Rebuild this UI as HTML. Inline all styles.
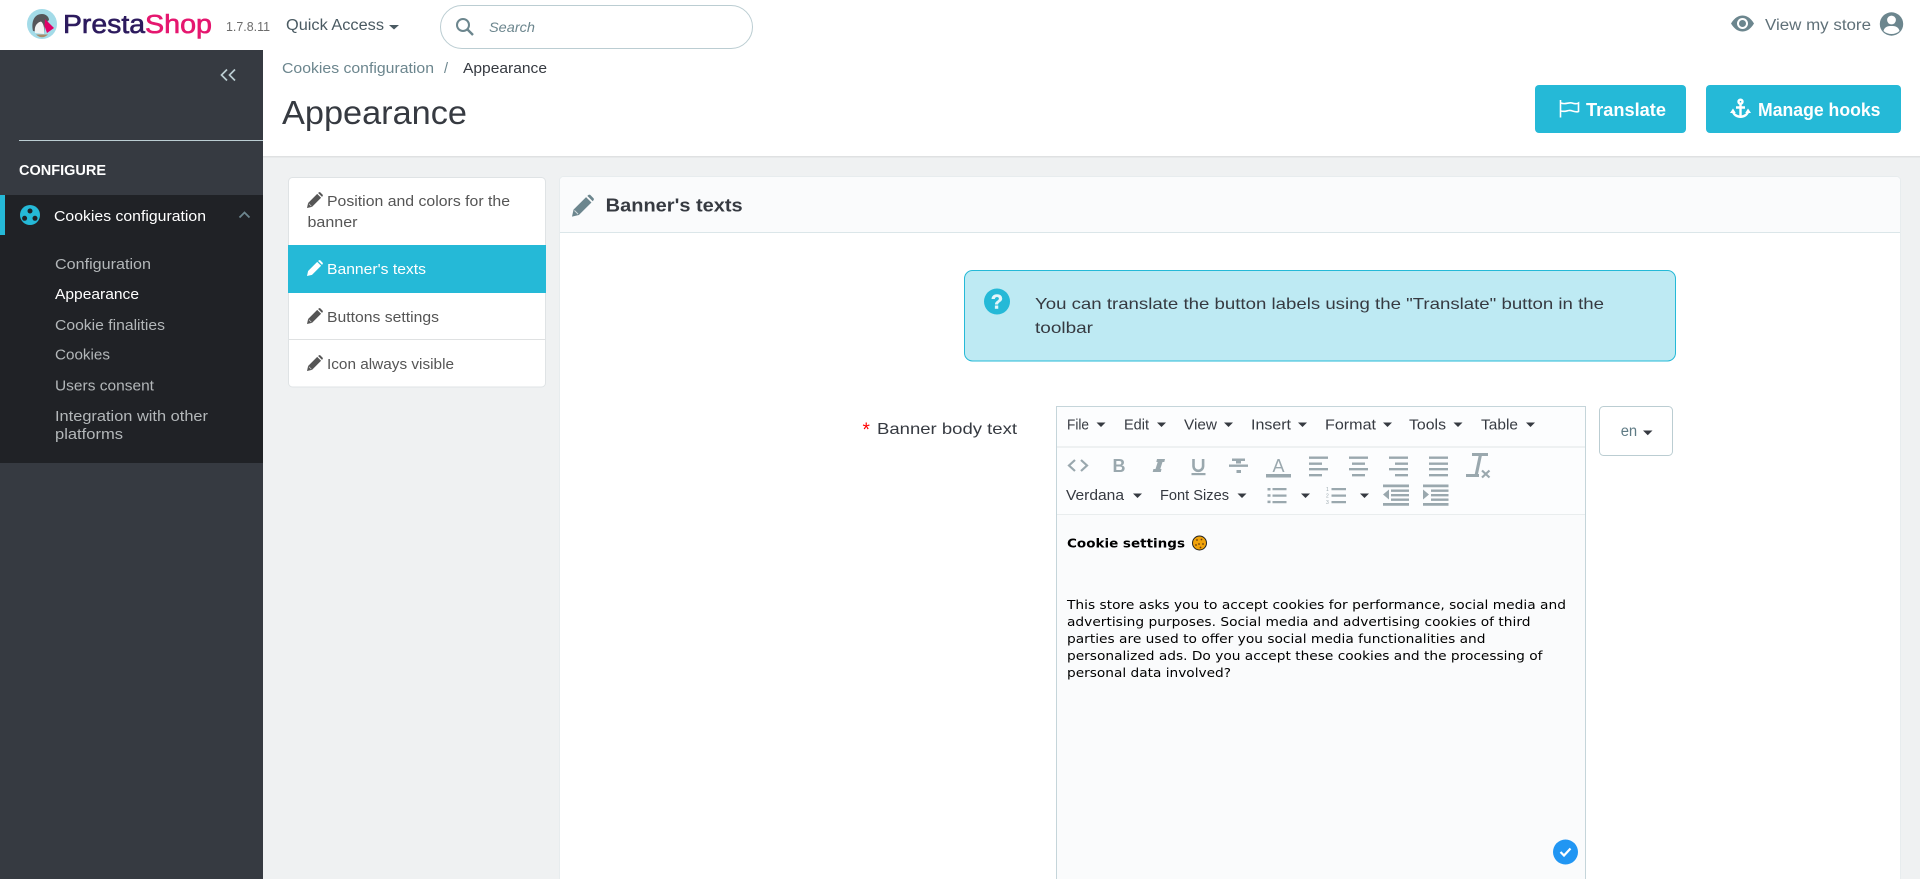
<!DOCTYPE html>
<html lang="en"><head><meta charset="utf-8"><title>Appearance</title>
<style>
html,body{margin:0;padding:0;width:1920px;height:879px;overflow:hidden;background:#eff1f2}
svg{display:block;position:absolute;left:0;top:0}
text{font-family:"Liberation Sans",Arial,sans-serif;white-space:pre}
.v{font-family:"DejaVu Sans",Verdana,sans-serif;font-size:12.6px;fill:#000}
.m{font-size:14.5px;fill:#363a41}
.s{font-size:14.5px;fill:#b3b7b9}
.tab{font-size:14.5px;fill:#555}
.tool{fill:#9aa8ae}
</style></head><body>
<svg width="1920" height="879" viewBox="0 0 1920 879" xmlns="http://www.w3.org/2000/svg">
<defs>
<g id="pen"><path d="M0 16 L1.1 11 L10.2 1.9 L14.1 5.8 L5 14.9 Z M11.1 1 L12 .3 Q12.6 -.1 13.2 .3 L15.7 2.8 Q16.1 3.4 15.7 4 L15 4.9 Z"/><path d="M1.8 11.6 L4.4 14.2" stroke="#fff" stroke-width=".7" opacity=".7"/></g>
</defs>
<rect width="1920" height="879" fill="#eff1f2"/>

<!-- top bar -->
<rect width="1920" height="50" fill="#fff"/>
<circle cx="42" cy="24" r="15" fill="#a3dbe8"/>
<path d="M33 31 C31 22 34 14 42 14 C46 14 49 17 49 20 L45 24 L44 33 Z" fill="#55565a"/>
<path d="M35 33 C34 27 36 23 41 21.5 C43 23 44 26 44 29 L44 34 Z" fill="#f3f3f3"/>
<path d="M45 19 L54 28 L47 33 L44.5 26 Z" fill="#df0067"/>
<path d="M36 34.5 Q42 40 48 34.5 Z" fill="#a98a68"/>
<text x="63" y="33" font-size="25.5" fill="#2d1b5e" stroke="#2d1b5e" stroke-width=".6" textLength="82" lengthAdjust="spacingAndGlyphs">Presta</text>
<text x="145" y="33" font-size="25.5" fill="#e5176f" stroke="#e5176f" stroke-width=".6" textLength="67" lengthAdjust="spacingAndGlyphs">Shop</text>
<text x="226" y="31" font-size="12.5" fill="#6c6c6c" textLength="44" lengthAdjust="spacingAndGlyphs">1.7.8.11</text>
<text x="286" y="30" font-size="15.5" fill="#4a5a62" textLength="98" lengthAdjust="spacingAndGlyphs">Quick Access</text>
<path d="M389 25 H399 L394 29.5 Z" fill="#4a5a62"/>
<rect x="440.5" y="5.5" width="312" height="43" rx="21.5" fill="#fff" stroke="#bbcdd2"/>
<circle cx="463" cy="25" r="6" fill="none" stroke="#6c868e" stroke-width="2"/>
<path d="M467.5 29.5 L473 35" stroke="#6c868e" stroke-width="2.4" fill="none"/>
<text x="489" y="32" font-size="14" font-style="italic" fill="#6c868e" textLength="46" lengthAdjust="spacingAndGlyphs">Search</text>
<path d="M1731 23.5 C1735 17 1739 15.5 1742.5 15.5 C1746 15.5 1750 17 1754 23.5 C1750 30 1746 31.5 1742.5 31.5 C1739 31.5 1735 30 1731 23.5 Z" fill="#6c868e"/>
<circle cx="1742.5" cy="23.5" r="5.5" fill="#fff"/><circle cx="1742.5" cy="23.5" r="3.5" fill="#6c868e"/>
<text x="1765" y="30" font-size="15.5" fill="#5f7078" textLength="106" lengthAdjust="spacingAndGlyphs">View my store</text>
<circle cx="1891.5" cy="24" r="11.7" fill="#6c868e"/>
<circle cx="1891.5" cy="20" r="4.4" fill="#fff"/>
<path d="M1883.5 31 C1884.5 26.5 1888 26 1891.5 26 C1895 26 1898.5 26.5 1899.5 31 C1895 35 1888 35 1883.5 31 Z" fill="#fff"/>

<!-- sidebar -->
<rect x="0" y="50" width="263" height="829" fill="#363a41"/>
<path d="M227 69.5 L221.5 75 L227 80.5 M235 69.5 L229.5 75 L235 80.5" fill="none" stroke="#bbcdd2" stroke-width="1.7"/>
<rect x="19" y="140" width="244" height="1" fill="#bbcdd2"/>
<text x="19" y="175" font-size="14.5" font-weight="700" fill="#fff" textLength="87" lengthAdjust="spacingAndGlyphs">CONFIGURE</text>
<rect x="0" y="195" width="263" height="268" fill="#202226"/>
<rect x="0" y="195" width="5" height="40" fill="#25b9d7"/>
<circle cx="30" cy="215" r="10" fill="#25b9d7"/>
<circle cx="30" cy="211" r="2.5" fill="#202226"/><circle cx="24.6" cy="218.3" r="2.5" fill="#202226"/><circle cx="35" cy="218.3" r="2.5" fill="#202226"/>
<text x="54" y="221" font-size="14.5" fill="#fff" textLength="152" lengthAdjust="spacingAndGlyphs">Cookies configuration</text>
<path d="M239.5 217.5 L244.5 212.5 L249.5 217.5" fill="none" stroke="#6c868e" stroke-width="1.8"/>
<text class="s" x="55" y="269" textLength="96" lengthAdjust="spacingAndGlyphs">Configuration</text>
<text x="55" y="299" font-size="14.5" fill="#fff" textLength="84" lengthAdjust="spacingAndGlyphs">Appearance</text>
<text class="s" x="55" y="330" textLength="110" lengthAdjust="spacingAndGlyphs">Cookie finalities</text>
<text class="s" x="55" y="359.5" textLength="55" lengthAdjust="spacingAndGlyphs">Cookies</text>
<text class="s" x="55" y="390.5" textLength="99" lengthAdjust="spacingAndGlyphs">Users consent</text>
<text class="s" x="55" y="421" textLength="153" lengthAdjust="spacingAndGlyphs">Integration with other</text>
<text class="s" x="55" y="439" textLength="68" lengthAdjust="spacingAndGlyphs">platforms</text>

<!-- page head -->
<rect x="263" y="50" width="1657" height="106" fill="#fff"/>
<rect x="263" y="156" width="1657" height="1.5" fill="#dfe1e2"/>
<text x="282" y="73" font-size="14.5" fill="#6c868e" textLength="152" lengthAdjust="spacingAndGlyphs">Cookies configuration</text>
<text x="444" y="73" font-size="14.5" fill="#6c868e">/</text>
<text x="463" y="73" font-size="14.5" fill="#363a41" textLength="84" lengthAdjust="spacingAndGlyphs">Appearance</text>
<text x="282" y="124" font-size="33" fill="#363a41" textLength="185" lengthAdjust="spacingAndGlyphs">Appearance</text>
<rect x="1535" y="85" width="151" height="48" rx="4" fill="#25b9d7"/>
<path d="M1560.5 100 V117.5" stroke="#fff" stroke-width="1.6" fill="none"/>
<path d="M1561 103 C1565 105 1569 102 1572 103 C1575 104 1577 104 1578.5 103 V111.5 C1575 113 1572 110 1569 110.5 C1566 111 1564 112 1561 111" fill="none" stroke="#fff" stroke-width="1.6"/>
<text x="1586" y="116" font-size="18" font-weight="700" fill="#fff" textLength="80" lengthAdjust="spacingAndGlyphs">Translate</text>
<rect x="1706" y="85" width="195" height="48" rx="4" fill="#25b9d7"/>
<g fill="none" stroke="#fff" stroke-width="2.4">
<circle cx="1740.5" cy="101.7" r="2"/><path d="M1740.5 104 V117 M1736 107.5 H1745"/>
<path d="M1732.8 110.5 C1733 114.5 1737 116.8 1740.5 116.8 C1744 116.8 1748 114.5 1748.2 110.5"/>
</g>
<path d="M1730 113 L1733 108.5 L1735.8 113 Z M1745.2 113 L1748 108.5 L1751 113 Z" fill="#fff"/>
<text x="1758" y="116" font-size="18" font-weight="700" fill="#fff" textLength="122.5" lengthAdjust="spacingAndGlyphs">Manage hooks</text>

<!-- tabs -->
<rect x="288.5" y="177.5" width="257" height="209.5" rx="4" fill="#fff" stroke="#dfe3e5"/>
<rect x="288" y="245" width="258" height="48" fill="#25b9d7"/>
<rect x="289" y="339" width="256" height="1" fill="#dfe1e2"/>
<use href="#pen" x="307" y="192" fill="#555"/>
<text class="tab" x="327" y="206" textLength="183" lengthAdjust="spacingAndGlyphs">Position and colors for the</text>
<text class="tab" x="307.5" y="227" textLength="50" lengthAdjust="spacingAndGlyphs">banner</text>
<use href="#pen" x="307" y="260" fill="#fff"/>
<text x="327" y="274" font-size="14.5" fill="#fff" textLength="99" lengthAdjust="spacingAndGlyphs">Banner's texts</text>
<use href="#pen" x="307" y="308" fill="#555"/>
<text class="tab" x="327" y="322" textLength="112" lengthAdjust="spacingAndGlyphs">Buttons settings</text>
<use href="#pen" x="307" y="355" fill="#555"/>
<text class="tab" x="327" y="369" textLength="127" lengthAdjust="spacingAndGlyphs">Icon always visible</text>

<!-- panel -->
<rect x="560" y="177" width="1340" height="702" fill="#fff"/>
<path d="M559.5 879 V181 Q559.5 176.5 564 176.5 H1896 Q1900.5 176.5 1900.5 181 V879" fill="none" stroke="#e7ecee"/>
<path d="M560 232 V181 Q560 177 564 177 H1896 Q1900 177 1900 181 V232 Z" fill="#fafbfc"/>
<rect x="560" y="232" width="1340" height="1" fill="#dbe6e9"/>
<use href="#pen" transform="translate(572 194.5) scale(1.38)" fill="#6c868e"/>
<text x="605.7" y="211.7" font-size="18.5" font-weight="700" fill="#363a41" textLength="137" lengthAdjust="spacingAndGlyphs">Banner's texts</text>

<!-- alert -->
<rect x="964.5" y="270.5" width="711" height="90.5" rx="8" fill="#beeaf3" stroke="#25b9d7"/>
<circle cx="997" cy="301.5" r="13" fill="#25b9d7"/>
<text x="997" y="308.5" font-size="20" font-weight="700" fill="#e4f6fa" stroke="#e4f6fa" stroke-width=".5" text-anchor="middle">?</text>
<text x="1035" y="309" font-size="16" fill="#363a41" textLength="569" lengthAdjust="spacingAndGlyphs">You can translate the button labels using the "Translate" button in the</text>
<text x="1035" y="333" font-size="16" fill="#363a41" textLength="58" lengthAdjust="spacingAndGlyphs">toolbar</text>

<!-- label -->
<text x="862.5" y="436" font-size="19" fill="#f00">*</text>
<text x="877" y="434" font-size="16" fill="#363a41" textLength="140" lengthAdjust="spacingAndGlyphs">Banner body text</text>

<!-- editor -->
<rect x="1056" y="406.5" width="530" height="472.5" fill="#fcfdfe"/>
<rect x="1057" y="515" width="529" height="364" fill="#fafbfc"/>
<rect x="1057" y="446" width="529" height="2" fill="#eef1f2"/>
<rect x="1057" y="514" width="529" height="1" fill="#e9edee"/>
<path d="M1056.5 879 V406.5 H1585.5 V879" fill="none" stroke="#c5d5da" stroke-width="1"/>

<text class="m" x="1067" y="429.5" textLength="22" lengthAdjust="spacingAndGlyphs">File</text>
<text class="m" x="1124" y="429.5" textLength="25" lengthAdjust="spacingAndGlyphs">Edit</text>
<text class="m" x="1184" y="429.5" textLength="33" lengthAdjust="spacingAndGlyphs">View</text>
<text class="m" x="1251" y="429.5" textLength="40" lengthAdjust="spacingAndGlyphs">Insert</text>
<text class="m" x="1325" y="429.5" textLength="51" lengthAdjust="spacingAndGlyphs">Format</text>
<text class="m" x="1409" y="429.5" textLength="37" lengthAdjust="spacingAndGlyphs">Tools</text>
<text class="m" x="1481" y="429.5" textLength="37" lengthAdjust="spacingAndGlyphs">Table</text>
<path fill="#363a41" d="M1096.5 422.5 h9 l-4.5 4.5z M1157 422.5 h9 l-4.5 4.5z M1224 422.5 h9 l-4.5 4.5z M1298 422.5 h9 l-4.5 4.5z M1383 422.5 h9 l-4.5 4.5z M1453.5 422.5 h9 l-4.5 4.5z M1526 422.5 h9 l-4.5 4.5z M1133 493.5 h9 l-4.5 4.5z M1237.5 493.5 h9 l-4.5 4.5z M1301 493.5 h9 l-4.5 4.5z M1360 493.5 h9 l-4.5 4.5z"/>
<text class="m" x="1066" y="500" textLength="58" lengthAdjust="spacingAndGlyphs">Verdana</text>
<text class="m" x="1160" y="500" textLength="69" lengthAdjust="spacingAndGlyphs">Font Sizes</text>

<!-- toolbar icons -->
<path d="M1075 460 L1069 465.5 L1075 471 M1081 460 L1087 465.5 L1081 471" fill="none" stroke="#9aa8ae" stroke-width="2.2"/>
<text x="1112.5" y="472" font-size="18" font-weight="700" class="tool">B</text>
<path class="tool" d="M1157 459 H1165 L1164.3 462 H1162.5 L1160.3 469 H1161.5 L1160.8 472 H1152.7 L1153.4 469 H1155.5 L1157.7 462 H1156.3 Z"/>
<path d="M1193.5 459 V466 a4.8 4.8 0 0 0 9.6 0 V459" fill="none" stroke="#9aa8ae" stroke-width="2.6"/>
<rect class="tool" x="1191.5" y="473" width="14" height="2.2"/>
<path class="tool" d="M1232 458.5 h13 v2.5 h-13z M1229 464.5 h19 v2.4 h-19z M1236 461 h5 v2.5 h-5z M1236.5 470 h4.5 v3 h-4.5z"/>
<text x="1278.5" y="472" font-size="18" text-anchor="middle" class="tool">A</text>
<rect class="tool" x="1266" y="474" width="25" height="3.5"/>
<path class="tool" d="M1309 456.5h19v2.4h-19z M1309 462.5h13v2.4h-13z M1309 468h19v2.4h-19z M1309 474h13v2.4h-13z
M1349 456.5h19v2.4h-19z M1352 462.5h13v2.4h-13z M1349 468h19v2.4h-19z M1352 474h13v2.4h-13z
M1389 456.5h19v2.4h-19z M1395 462.5h13v2.4h-13z M1389 468h19v2.4h-19z M1395 474h13v2.4h-13z
M1429 456.5h19v2.4h-19z M1429 462.5h19v2.4h-19z M1429 468h19v2.4h-19z M1429 474h19v2.4h-19z"/>
<path class="tool" d="M1472 453 h16 v3 h-6.2 l-3.8 18 h-3.2 l3.8 -18 h-6.6z M1466 474 h13 v3 h-13z"/>
<path d="M1482 470.5 L1489.5 477.5 M1489.5 470.5 L1482 477.5" stroke="#9aa8ae" stroke-width="2.2" fill="none"/>
<path class="tool" d="M1267.5 488h3v2.5h-3z M1267.5 494.3h3v2.5h-3z M1267.5 500.6h3v2.5h-3z M1272.5 488h14v2.2h-14z M1272.5 494.5h14v2.2h-14z M1272.5 501h14v2.2h-14z"/>
<path class="tool" d="M1331.5 488h14.5v2.2h-14.5z M1331.5 494.5h14.5v2.2h-14.5z M1331.5 501h14.5v2.2h-14.5z"/>
<text x="1326" y="491" font-size="5" class="tool">1</text><text x="1326" y="497.5" font-size="5" class="tool">2</text><text x="1326" y="504" font-size="5" class="tool">3</text>
<path class="tool" d="M1383 484.5h26v2.8h-26z M1391 489.5h18v2.4h-18z M1391 494h18v2.4h-18z M1391 498.5h18v2.4h-18z M1383 503h26v2.8h-26z M1389 489.5 v10 l-6 -5z"/>
<path class="tool" d="M1423 484.5h25.5v2.8h-25.5z M1431 489.5h17.5v2.4h-17.5z M1431 494h17.5v2.4h-17.5z M1431 498.5h17.5v2.4h-17.5z M1423 503h25.5v2.8h-25.5z M1423 489.5 v10 l6 -5z"/>

<!-- editor content -->
<text class="v" x="1067" y="547.5" font-weight="700" textLength="118" lengthAdjust="spacingAndGlyphs">Cookie settings</text>
<circle cx="1199.5" cy="543" r="7" fill="#f0a30a" stroke="#222" stroke-width="1"/>
<g fill="#6b3f10"><circle cx="1197" cy="540" r=".9"/><circle cx="1201.5" cy="539.5" r=".9"/><circle cx="1203" cy="544" r=".9"/><circle cx="1199" cy="544" r=".9"/><circle cx="1196" cy="545" r=".9"/><circle cx="1200.5" cy="547.5" r=".9"/></g>
<text class="v" x="1067" y="609" textLength="499" lengthAdjust="spacingAndGlyphs">This store asks you to accept cookies for performance, social media and</text>
<text class="v" x="1067" y="626" textLength="463.5" lengthAdjust="spacingAndGlyphs">advertising purposes. Social media and advertising cookies of third</text>
<text class="v" x="1067" y="643" textLength="418.5" lengthAdjust="spacingAndGlyphs">parties are used to offer you social media functionalities and</text>
<text class="v" x="1067" y="660" textLength="475.5" lengthAdjust="spacingAndGlyphs">personalized ads. Do you accept these cookies and the processing of</text>
<text class="v" x="1067" y="677" textLength="164" lengthAdjust="spacingAndGlyphs">personal data involved?</text>
<circle cx="1565.5" cy="852" r="12.5" fill="#2196f3"/>
<path d="M1560.5 852 L1564 855.5 L1570.5 848.5" fill="none" stroke="#fff" stroke-width="2.2"/>

<!-- language button -->
<rect x="1599.5" y="406.5" width="73" height="49" rx="4" fill="#fff" stroke="#bbcdd2"/>
<text x="1620.7" y="436" font-size="15.5" fill="#5f7b85" textLength="16.5" lengthAdjust="spacingAndGlyphs">en</text>
<path d="M1643 430.5 h9.5 l-4.75 4.8z" fill="#363a41"/>
</svg>
</body></html>
